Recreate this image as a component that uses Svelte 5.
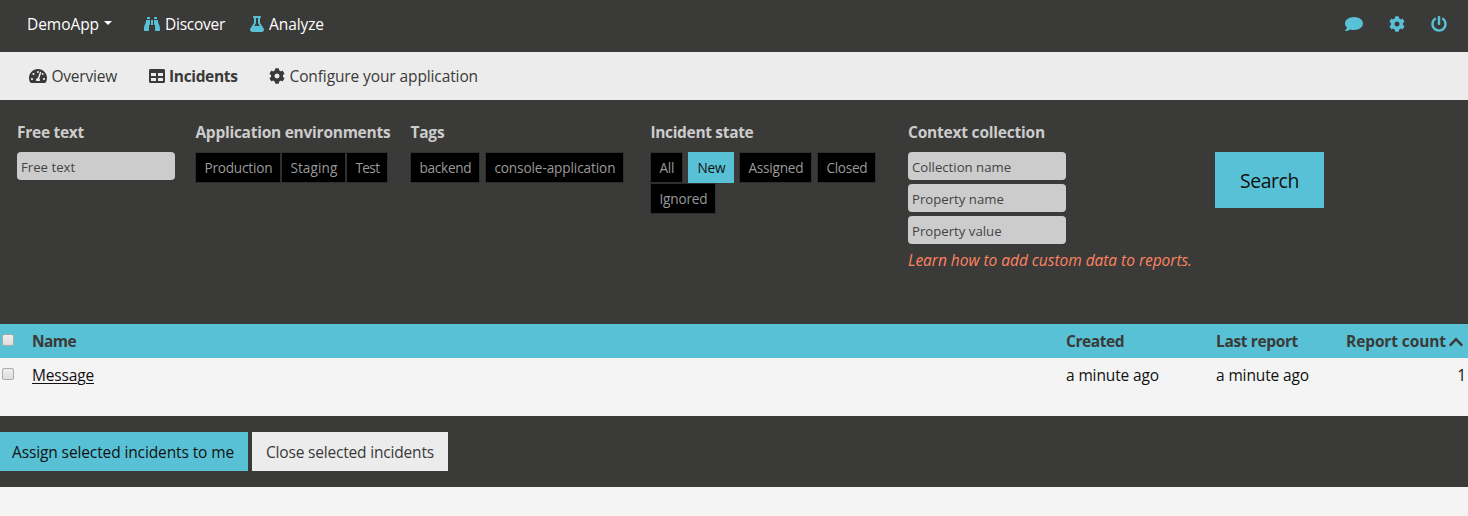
<script>
  const icons = {
    binoculars: [512, 'M416 48c0-8.84-7.16-16-16-16h-64c-8.84 0-16 7.16-16 16v48h96V48zM63.91 159.99C61.4 253.84 3.46 274.22 0 404v44c0 17.67 14.33 32 32 32h96c17.67 0 32-14.33 32-32V288h32V128H95.84c-17.63 0-31.45 14.37-31.93 31.99zm384.18 0c-.48-17.62-14.3-31.99-31.93-31.99H320v160h32v160c0 17.67 14.33 32 32 32h96c17.67 0 32-14.33 32-32v-44c-3.46-129.78-61.4-150.16-63.91-244.01zM176 32h-64c-8.84 0-16 7.16-16 16v48h96V48c0-8.84-7.16-16-16-16zm48 256h64V128h-64v160z'],
    flask: [448, 'M437.2 403.5L320 215V64h8c13.3 0 24-10.7 24-24V24c0-13.3-10.7-24-24-24H120c-13.3 0-24 10.7-24 24v16c0 13.3 10.7 24 24 24h8v151L10.8 403.5C-18.5 450.6 15.3 512 70.9 512h306.2c55.7 0 89.4-61.5 60.1-108.5zM137.9 320l48.2-77.6c3.7-5.2 5.8-11.6 5.8-18.4V64h64v160c0 6.9 2.2 13.2 5.8 18.4l48.2 77.6h-172z'],
    cog: [512, 'M487.4 315.7l-42.6-24.6c4.3-23.2 4.3-47 0-70.2l42.6-24.6c4.9-2.8 7.1-8.6 5.5-14-11.1-35.6-30-67.8-54.7-94.6-3.8-4.1-10-5.1-14.8-2.3L380.8 110c-17.9-15.4-38.5-27.3-60.8-35.1V25.8c0-5.6-3.9-10.5-9.4-11.7-36.7-8.2-74.3-7.8-109.2 0-5.5 1.2-9.4 6.1-9.4 11.7V75c-22.2 7.9-42.8 19.8-60.8 35.1L88.7 85.5c-4.9-2.8-11-1.9-14.8 2.3-24.7 26.7-43.6 58.9-54.7 94.6-1.7 5.4.6 11.2 5.5 14L67.3 221c-4.3 23.2-4.3 47 0 70.2l-42.6 24.6c-4.9 2.8-7.1 8.6-5.5 14 11.1 35.6 30 67.8 54.7 94.6 3.8 4.1 10 5.1 14.8 2.3l42.6-24.6c17.9 15.4 38.5 27.3 60.8 35.1v49.2c0 5.6 3.9 10.5 9.4 11.7 36.7 8.2 74.3 7.8 109.2 0 5.5-1.2 9.4-6.1 9.4-11.7v-49.2c22.2-7.9 42.8-19.8 60.8-35.1l42.6 24.6c4.9 2.8 11 1.9 14.8-2.3 24.7-26.7 43.6-58.9 54.7-94.6 1.5-5.5-.7-11.3-5.6-14.1zM256 336c-44.1 0-80-35.9-80-80s35.9-80 80-80 80 35.9 80 80-35.9 80-80 80z'],
    power: [512, 'M400 54.1c63 45 104 118.6 104 201.9 0 136.8-110.8 247.7-247.5 248C120 504.3 8.2 393 8 256.4 7.9 173.1 48.9 99.3 111.8 54.2c11.7-8.3 28-4.8 35 7.7L162.6 90c5.9 10.5 3.1 23.8-6.6 31-41.5 30.8-68 79.6-68 134.9-.1 92.3 74.5 168.1 168 168.1 91.6 0 168.6-74.2 168-169.1-.3-51.8-24.7-101.8-68.1-134-9.7-7.2-12.4-20.5-6.5-30.9l15.8-28.1c7-12.4 23.2-16.1 34.8-7.8zM296 264V24c0-13.3-10.7-24-24-24h-32c-13.3 0-24 10.7-24 24v240c0 13.3 10.7 24 24 24h32c13.3 0 24-10.7 24-24z'],
    gauge: [576, 'M288 32C128.94 32 0 160.94 0 320c0 52.8 14.25 102.26 39.06 144.8 5.61 9.62 16.3 15.2 27.44 15.2h443c11.14 0 21.83-5.58 27.44-15.2C561.75 422.26 576 372.8 576 320c0-159.06-128.94-288-288-288zm0 64c14.71 0 26.58 10.13 30.32 23.65-1.11 2.26-2.64 4.23-3.45 6.67l-9.22 27.67c-5.13 3.49-10.97 6.01-17.64 6.01-17.67 0-32-14.33-32-32S270.33 96 288 96zM96 384c-17.67 0-32-14.33-32-32s14.33-32 32-32 32 14.33 32 32-14.33 32-32 32zm48-160c-17.67 0-32-14.33-32-32s14.33-32 32-32 32 14.33 32 32-14.33 32-32 32zm246.77-72.41l-61.33 184C343.13 347.33 352 364.54 352 384c0 11.72-3.38 22.55-8.88 32H232.88c-5.5-9.45-8.88-20.28-8.88-32 0-33.94 26.5-61.43 59.9-63.59l61.34-184.01c4.17-12.56 17.73-19.45 30.36-15.17 12.57 4.19 19.35 17.79 15.17 30.36zm14.66 57.2l15.52-46.55c3.47-1.29 7.13-2.23 11.05-2.23 17.67 0 32 14.33 32 32s-14.33 32-32 32c-11.38-.01-20.89-6.28-26.57-15.22zM480 384c-17.67 0-32-14.33-32-32s14.33-32 32-32 32 14.33 32 32-14.33 32-32 32z'],
    table: [512, 'M464 32H48C21.49 32 0 53.49 0 80v352c0 26.51 21.49 48 48 48h416c26.51 0 48-21.49 48-48V80c0-26.51-21.49-48-48-48zM224 416H64v-96h160v96zm0-160H64v-96h160v96zm224 160H288v-96h160v96zm0-160H288v-96h160v96z'],
    chevron: [448, 'M240.971 130.524l194.343 194.343c9.373 9.373 9.373 24.569 0 33.941l-22.667 22.667c-9.357 9.357-24.522 9.375-33.901.04L224 227.495 69.255 381.516c-9.379 9.335-24.544 9.317-33.901-.04l-22.667-22.667c-9.373-9.373-9.373-24.569 0-33.941L207.03 130.525c9.372-9.373 24.568-9.373 33.941-.001z']
  };

  const environments = [['Production', 68], ['Staging', 47], ['Test', 24]];
  const tags = [['backend', 52], ['console-application', 121]];
  const states = [['All', 15], ['New', 28], ['Assigned', 55], ['Closed', 41], ['Ignored', 48]];
  let active = $state('New');

  // Spreads the letters of a label so that it takes up the given width.
  function fit(node, width) {
    const natural = node.getBoundingClientRect().width;
    node.style.letterSpacing = (width - natural) / node.textContent.length + 'px';
  }
</script>

{#snippet icon(name)}
  <svg class="icon" viewBox="0 0 {icons[name][0]} 512" width={icons[name][0] / 32} height="16" aria-hidden="true"><path d={icons[name][1]} /></svg>
{/snippet}

{#snippet label(text, width)}<span class="label" use:fit={width}>{text}</span>{/snippet}

<header>
  <a class="brand" href="#top">{@render label('DemoApp', 72)}<i class="caret"></i></a>
  <a class="discover" href="#discover">{@render icon('binoculars')}{@render label('Discover', 60)}</a>
  <a href="#analyze">{@render icon('flask')}{@render label('Analyze', 55)}</a>
  <div class="tools">
    <svg class="icon" viewBox="0 32 512 448" width="18" height="14" preserveAspectRatio="none" aria-hidden="true"><path d="M256 32C114.6 32 0 125.1 0 240c0 49.6 21.4 95 57 130.7C44.5 421.1 2.7 466 2.2 466.5c-2.2 2.3-2.8 5.7-1.5 8.7S4.8 480 8 480c66.3 0 116-31.8 140.6-51.4 32.7 12.3 69 19.4 107.4 19.4 141.4 0 256-93.1 256-208S397.4 32 256 32z" /></svg>
    {@render icon('cog')}{@render icon('power')}
  </div>
</header>

<nav>
  <a href="#overview">{@render icon('gauge')}{@render label('Overview', 65.5)}</a>
  <a class="current" href="#incidents">{@render icon('table')}{@render label('Incidents', 68.5)}</a>
  <a href="#configure">{@render icon('cog')}{@render label('Configure your application', 188.5)}</a>
</nav>

<section class="filters">
  <div class="group">
    <h2>{@render label('Free text', 67)}</h2>
    <input placeholder="Free text" />
  </div>
  <div class="group">
    <h2>{@render label('Application environments', 195)}</h2>
    <div class="chips tight">
      {#each environments as [name, w]}<button>{@render label(name, w)}</button>{/each}
    </div>
  </div>
  <div class="group">
    <h2>{@render label('Tags', 34)}</h2>
    <div class="chips">
      {#each tags as [name, w]}<button>{@render label(name, w)}</button>{/each}
    </div>
  </div>
  <div class="group">
    <h2>{@render label('Incident state', 103)}</h2>
    <div class="chips">
      {#each states as [name, w]}<button class:active={active === name} onclick={() => (active = name)}>{@render label(name, w)}</button>{/each}
    </div>
  </div>
  <div class="group">
    <h2>{@render label('Context collection', 137)}</h2>
    <input placeholder="Collection name" />
    <input placeholder="Property name" />
    <input placeholder="Property value" />
    <em>{@render label('Learn how to add custom data to reports.', 284)}</em>
  </div>
  <button class="search">{@render label('Search', 59)}</button>
</section>

<section class="list">
  <div class="row head">
    <span><i class="check"></i></span>
    <span>{@render label('Name', 44)}</span>
    <span>{@render label('Created', 58)}</span>
    <span>{@render label('Last report', 82)}</span>
    <span class="sort">{@render label('Report count', 100)}{@render icon('chevron')}</span>
  </div>
  <div class="row">
    <span><i class="check"></i></span>
    <span><a href="#message">{@render label('Message', 62)}</a></span>
    <span>{@render label('a minute ago', 93)}</span>
    <span>{@render label('a minute ago', 93)}</span>
    <span class="count">1</span>
  </div>
</section>

<footer>
  <button class="assign">{@render label('Assign selected incidents to me', 222)}</button>
  <button class="close">{@render label('Close selected incidents', 168)}</button>
</footer>

<style>
  :global(body) {
    background: #f4f4f4;
    font: 15.5px/24px "Open Sans", "Noto Sans", sans-serif;
    color: #111;
  }
  a { color: inherit; text-decoration: none; }
  button, input { font: inherit; border: 0; margin: 0; box-sizing: border-box; }
  .label { display: inline-block; white-space: pre; }
  .icon { display: block; flex: none; fill: currentColor; }

  header, nav { display: flex; align-items: center; box-sizing: border-box; }
  header { height: 52px; padding: 0 21px 4px 27px; background: #3a3a38; color: #fff; }
  header a { display: flex; align-items: center; gap: 5px; }
  header .icon { color: #59c1d5; }
  .brand { margin-right: 32px; }
  .discover { margin-right: 25px; }
  .caret { border: 4px solid transparent; border-top-color: #fff; border-bottom: 0; margin-bottom: 3px; }
  .tools { display: flex; align-items: center; gap: 26px; margin-left: auto; }

  nav { height: 48px; padding: 0 29px; background: #ececec; color: #3a3a38; }
  nav a { display: flex; align-items: center; gap: 4.5px; margin-right: 31.5px; }
  nav .current { font-weight: 700; }

  .filters { display: flex; align-items: flex-start; height: 224px; box-sizing: border-box; padding: 20px 17px 0; background: #3a3a38; color: #ccc; }
  .group { display: flex; flex-direction: column; align-items: flex-start; flex: none; }
  .group:nth-child(1) { width: 178.4px; }
  .group:nth-child(2) { width: 215px; }
  .group:nth-child(3) { width: 240px; }
  .group:nth-child(4) { width: 257.6px; }
  .group:nth-child(5) { width: 307px; }
  h2 { font: inherit; font-weight: 700; margin: 0 0 8px; }
  input { width: 158px; height: 28px; margin-bottom: 4px; padding: 2px 4px 0; border-radius: 4px; background: #ccc; font-size: 13.2px; }
  input::placeholder { color: #444; opacity: 1; }
  em { color: #ff8361; }
  .chips { display: flex; flex-wrap: wrap; column-gap: 5px; font-size: 13.6px; }
  .tight { column-gap: 0; }
  .chips button { height: 31px; padding: 1px 8px 0; border: 1px solid #2f2f2f; background: #000; color: #999; line-height: 20px; }
  .chips .active { background: #59c1d5; border-color: #59c1d5; color: #111; }
  .search { width: 109px; height: 56px; margin-top: 32px; padding: 2px 0 0; background: #59c1d5; color: #111; font-size: 19.4px; }

  .list { height: 92px; }
  .row { display: grid; grid-template-columns: 32px 1034px 150px 130px 1fr; height: 34px; line-height: 35px; }
  .head { background: #59c1d5; color: #3a3a38; font-weight: 700; }
  .row a .label { text-decoration: underline; text-decoration-thickness: 1px; text-underline-offset: 2px; }
  .check { display: block; width: 12px; height: 12px; margin: 10px 0 0 2px; box-sizing: border-box; border: 1px solid #aaa; border-radius: 2px; background: linear-gradient(#eee, #ddd); }
  .sort { display: flex; align-items: center; gap: 3px; }
  .count { text-align: right; padding-right: 2px; }

  footer { display: flex; gap: 4px; height: 71px; padding: 16px 0; box-sizing: border-box; background: #3a3a38; }
  footer button { height: 39px; padding: 0; }
  .assign { width: 248px; padding-right: 2px; background: #59c1d5; color: #111; }
  .close { width: 196px; background: #ececec; color: #3a3a38; }
</style>
